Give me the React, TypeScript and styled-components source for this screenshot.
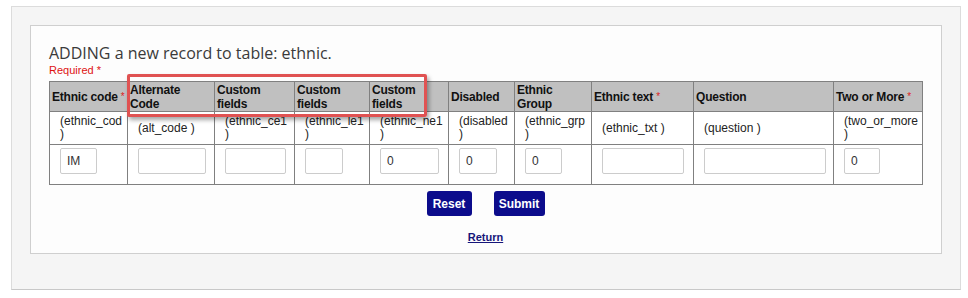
import React from 'react';
import styled, { createGlobalStyle } from 'styled-components';

const GlobalStyle = createGlobalStyle`
    html, body {
        margin: 0;
        padding: 0;
        background: #ffffff;
    }
    body {
        font-family: "Liberation Sans", Arial, sans-serif;
    }
`;

interface Column {
    title: string;
    required?: boolean;
    nowrap?: boolean;
    field: string;
    width: number;
    inputWidth: number;
    value: string;
}

const columns: Column[] = [
    { title: 'Ethnic code', required: true, nowrap: true, field: 'ethnic_cod', width: 78, inputWidth: 37, value: 'IM' },
    { title: 'Alternate Code', field: 'alt_code', width: 87, inputWidth: 68, value: '' },
    { title: 'Custom fields', field: 'ethnic_ce1', width: 80, inputWidth: 61, value: '' },
    { title: 'Custom fields', field: 'ethnic_le1', width: 75, inputWidth: 38, value: '' },
    { title: 'Custom fields', field: 'ethnic_ne1', width: 79, inputWidth: 59, value: '0' },
    { title: 'Disabled', field: 'disabled', width: 66, inputWidth: 38, value: '0' },
    { title: 'Ethnic Group', field: 'ethnic_grp', width: 77, inputWidth: 37, value: '0' },
    { title: 'Ethnic text', required: true, field: 'ethnic_txt', width: 102, inputWidth: 82, value: '' },
    { title: 'Question', field: 'question', width: 140, inputWidth: 122, value: '' },
    { title: 'Two or More', required: true, field: 'two_or_more', width: 89, inputWidth: 36, value: '0' },
];

const Page = styled.div`
    padding: 6px 7px 8px 11px;
`;

const OuterPanel = styled.div`
    box-sizing: border-box;
    width: 950px;
    height: 284px;
    background: #f5f5f5;
    border: 1px solid #dcdcdc;
    border-bottom-color: #c8c8c8;
    padding: 18px 18px 0 18px;
`;

const InnerPanel = styled.div`
    box-sizing: border-box;
    width: 912px;
    height: 229px;
    background: #fdfdfd;
    border: 1px solid #cfcfcf;
    padding: 18px 19px 0 18px;
`;

const Title = styled.h2`
    margin: 0;
    font-family: "Open Sans", sans-serif;
    font-weight: 400;
    font-size: 16px;
    line-height: 19px;
    color: #3a3a3a;
`;

const Required = styled.div`
    font-size: 11px;
    line-height: 14px;
    color: #dd1111;
    margin-bottom: 4px;
`;

const Star = styled.span`
    color: #dd2222;
    font-size: 10px;
    font-weight: normal;
    letter-spacing: 0;
    vertical-align: 1px;
    margin-left: 3px;
`;

const TableWrap = styled.div`
    position: relative;
    width: 874px;
`;

const Table = styled.table`
    width: 874px;
    table-layout: fixed;
    border-collapse: collapse;
    border: 1px solid #808080;
`;

const HeadCell = styled.th<{ $nowrap?: boolean }>`
    height: 29px;
    padding: 0 4px 0 2px;
    background: #c0c0c0;
    border: 1px solid #808080;
    text-align: left;
    vertical-align: middle;
    font-size: 12px;
    font-weight: bold;
    letter-spacing: -0.2px;
    line-height: 14px;
    color: #111111;
    white-space: ${p => (p.$nowrap ? 'nowrap' : 'normal')};
`;

const FieldCell = styled.td`
    height: 32px;
    padding: 0 4px 0 10px;
    border: 1px solid #808080;
    vertical-align: middle;
    font-size: 12px;
    line-height: 13px;
    color: #222222;
    background: #ffffff;
`;

const InputCell = styled.td`
    height: 36px;
    padding: 3px 4px 0 10px;
    border: 1px solid #808080;
    vertical-align: top;
    background: #ffffff;
`;

const TextInput = styled.input<{ $w: number }>`
    box-sizing: border-box;
    width: ${p => p.$w}px;
    height: 26px;
    padding: 0 6px;
    border: 1px solid #cccccc;
    border-radius: 2px;
    background: #ffffff;
    font-family: "Liberation Sans", Arial, sans-serif;
    font-size: 12px;
    color: #333333;
    outline: none;
`;

const Highlight = styled.div`
    position: absolute;
    left: 78px;
    top: -7px;
    width: 300px;
    height: 43px;
    box-sizing: border-box;
    border: 3px solid #e05252;
    border-radius: 2px;
    box-shadow: 2px 3px 4px rgba(0, 0, 0, 0.35);
    pointer-events: none;
`;

const ButtonRow = styled.div`
    display: flex;
    justify-content: center;
    gap: 22px;
    margin-top: 6px;
`;

const ActionButton = styled.button<{ $w: number }>`
    width: ${p => p.$w}px;
    height: 25px;
    padding: 0;
    border: none;
    border-radius: 3px;
    background: #0c0c8c;
    color: #ffffff;
    font-family: "Liberation Sans", Arial, sans-serif;
    font-size: 12px;
    font-weight: bold;
    cursor: pointer;
`;

const LinkRow = styled.div`
    display: flex;
    justify-content: center;
    margin-top: 15px;
`;

const ReturnLink = styled.a`
    font-size: 11px;
    font-weight: bold;
    color: #16167a;
    text-decoration: underline;
`;

const App = () => {
    return (
        <Page>
            <GlobalStyle />
            <OuterPanel>
                <InnerPanel>
                    <Title>ADDING a new record to table: ethnic.</Title>
                    <Required>Required *</Required>
                    <TableWrap>
                        <Table>
                            <colgroup>
                                {columns.map((c, i) => <col key={i} style={{ width: c.width }} />)}
                            </colgroup>
                            <tbody>
                                <tr>
                                    {columns.map((c, i) => (
                                        <HeadCell key={i} $nowrap={c.nowrap}>
                                            {c.title}
                                            {c.required && <Star>*</Star>}
                                        </HeadCell>
                                    ))}
                                </tr>
                                <tr>
                                    {columns.map((c, i) => (
                                        <FieldCell key={i}>({c.field} )</FieldCell>
                                    ))}
                                </tr>
                                <tr>
                                    {columns.map((c, i) => (
                                        <InputCell key={i}>
                                            <TextInput $w={c.inputWidth} defaultValue={c.value} />
                                        </InputCell>
                                    ))}
                                </tr>
                            </tbody>
                        </Table>
                        <Highlight />
                    </TableWrap>
                    <ButtonRow>
                        <ActionButton $w={45}>Reset</ActionButton>
                        <ActionButton $w={51}>Submit</ActionButton>
                    </ButtonRow>
                    <LinkRow>
                        <ReturnLink href="#">Return</ReturnLink>
                    </LinkRow>
                </InnerPanel>
            </OuterPanel>
        </Page>
    );
};

export default App;
